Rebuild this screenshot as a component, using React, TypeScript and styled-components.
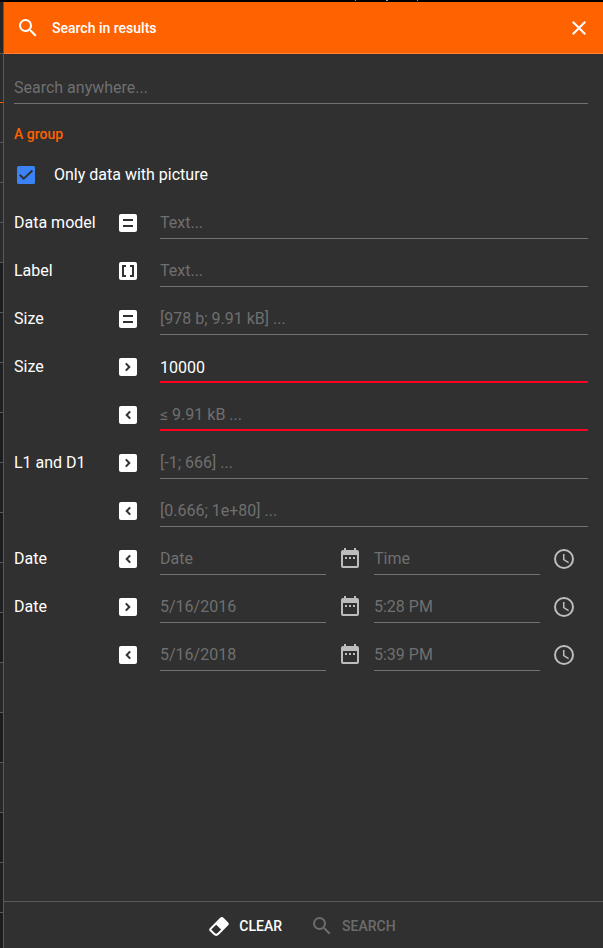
import React from "react";
import styled, { createGlobalStyle } from "styled-components";

const Global = createGlobalStyle`
  *, *::before, *::after { box-sizing: border-box; }
  body { margin: 0; background: #303030; color: #fff; font-family: Roboto, sans-serif; }
`;
const Page = styled.div`
  height: 948px;
  display: grid;
  grid-template: 2px 946px / 3px 1fr;
  overflow: hidden;
`;
const TopStrip = styled.div`
  grid-column: 1 / 3;
  display: flex;
  background: #000;
`;
const Speck = styled.i<{ $gap: number; $w: number }>`
  margin-left: ${(p) => p.$gap}px;
  width: ${(p) => p.$w}px;
  height: 1px;
  background: #9a9ab8;
`;
const Gutter = styled.div`
  display: flex;
  flex-direction: column;
`;
const GutterCell = styled.div<{ $h: number; $bg: string; $accent?: boolean }>`
  height: ${(p) => p.$h}px;
  flex: none;
  background: ${(p) => p.$bg};
  border-bottom: 1px solid ${(p) => (p.$accent ? "#ff6200" : "#595959")};
`;
const Panel = styled.main`
  display: flex;
  flex-direction: column;
  border-left: 1px solid #595959;
  background: #303030;
`;
const Header = styled.header`
  height: 52px;
  flex: none;
  display: flex;
  align-items: center;
  padding: 0 12px;
  background: #ff6200;
  border-bottom: 1px solid #ff8133;
`;
const Title = styled.h1`
  flex: 1;
  margin: 0 0 0 12px;
  font-size: 14px;
  line-height: 20px;
  font-weight: 500;
`;
const Icon = styled.svg`
  display: block;
  flex: none;
  width: 24px;
  height: 24px;
  fill: currentColor;
`;
const Body = styled.section`
  flex: 1;
  padding: 10px 15px 0 10px;
`;
const Row = styled.div`
  height: 48px;
  display: flex;
  align-items: flex-start;
`;
const Label = styled.span`
  width: 102px;
  flex: none;
  padding-top: 13px;
  font-size: 16px;
  line-height: 24px;
`;
const Operator = styled.span`
  width: 44px;
  flex: none;
  padding-top: 13px;
`;
const Field = styled.input<{ $error?: boolean; $wide?: boolean }>`
  display: block;
  width: ${(p) => (p.$wide ? "auto" : "166px")};
  flex: ${(p) => (p.$wide ? "1" : "none")};
  min-width: 0;
  height: 41px;
  margin: 0;
  padding: ${(p) => (p.$error ? (p.defaultValue ? "14px 0 2px" : "13px 0 3px") : "12px 0 4px")};
  border: 0;
  border-bottom: ${(p) => (p.$error ? "2px solid #ff0022" : "1px solid #717171")};
  border-radius: 0;
  outline: 0;
  background: transparent;
  color: #fff;
  font: 400 16px/24px Roboto, sans-serif;
  &::placeholder { color: #6f6f6f; opacity: 1; }
`;
const SearchField = styled(Field)`
  height: 40px;
  padding: 11px 0 4px;
`;
const PickerIcon = styled.span<{ $drop?: number }>`
  width: 48px;
  flex: none;
  padding: ${(p) => 12 + (p.$drop ?? 0)}px 12px 0;
  color: #bdbdbd;
`;
const SearchRow = styled.div`
  height: 48px;
  display: flex;
  align-items: flex-start;
`;
const GroupTitle = styled.h2`
  margin: 11px 0 0;
  height: 27px;
  font-size: 14px;
  line-height: 20px;
  padding-top: 1px;
  font-weight: 500;
  color: #ff6200;
`;
const CheckRow = styled.label`
  height: 48px;
  display: flex;
  align-items: flex-start;
  padding-top: 13px;
  font-size: 16px;
  line-height: 23px;
`;
const CheckIcon = styled(Icon)`
  color: #3b82f6;
  margin-right: 16px;
`;
const Footer = styled.footer`
  height: 47px;
  flex: none;
  display: flex;
  align-items: center;
  justify-content: center;
  gap: 28px;
  padding: 2px 4px 0 0;
  border-top: 1px solid #595959;
`;
const Action = styled.button<{ $muted?: boolean }>`
  display: flex;
  align-items: center;
  gap: 8px;
  border: 0;
  padding: 0;
  background: transparent;
  color: ${(p) => (p.$muted ? "#6c6c6c" : "#fff")};
  font: 500 14px/20px Roboto, sans-serif;
`;

const SEARCH =
  "M9.5 3A6.5 6.5 0 0 1 16 9.5c0 1.61-.59 3.09-1.56 4.23l.27.27h.79l5 5-1.5 1.5-5-5v-.79l-.27-.27A6.516 6.516 0 0 1 9.5 16a6.5 6.5 0 0 1 0-13m0 2C7 5 5 7 5 9.5S7 14 9.5 14 14 12 14 9.5 12 5 9.5 5Z";
const CLOSE =
  "M19 6.41 17.59 5 12 10.59 6.41 5 5 6.41 10.59 12 5 17.59 6.41 19 12 13.41 17.59 19 19 17.59 13.41 12Z";
const ERASER =
  "M16.24 3.56l4.95 4.94c.78.79.78 2.05 0 2.84L12 20.53a4.008 4.008 0 0 1-5.66 0L2.81 17c-.78-.79-.78-2.05 0-2.84l10.6-10.6c.79-.78 2.05-.78 2.83 0M4.22 15.58l3.54 3.53c.78.79 2.04.79 2.83 0l3.53-3.53-4.95-4.95-4.95 4.95Z";
const CALENDAR =
  "M7 11h2v2H7v-2m4 0h2v2h-2v-2m4 0h2v2h-2v-2M5 22a2 2 0 0 1-2-2V6c0-1.1.9-2 2-2h1V2h2v2h8V2h2v2h1a2 2 0 0 1 2 2v14a2 2 0 0 1-2 2H5m0-2h14V9H5v11Z";
const CLOCK =
  "M12 20a8 8 0 0 0 0-16 8 8 0 0 0 0 16m0-18a10 10 0 1 1 0 20 10 10 0 0 1 0-20m.5 5v5.25l4.5 2.67-.75 1.23L11 13V7h1.5Z";

type Op = "eq" | "in" | "gt" | "lt";
const glyphs: Record<Op, string> = {
  eq: "M7 9H17M7 15H17",
  in: "M10 7H7V17H10M14 7H17V17H14",
  gt: "M9.8 8.4L13.3 12L9.8 15.6",
  lt: "M14.2 8.4L10.7 12L14.2 15.6",
};

const Glyph = ({ d }: { d: string }) => (
  <Icon viewBox="0 0 24 24"><path d={d} /></Icon>
);
const OperatorIcon = ({ op }: { op: Op }) => (
  <Operator>
    <Icon viewBox="0 0 24 24">
      <rect x="3" y="3" width="18" height="18" rx="2" />
      <path d={glyphs[op]} fill="none" stroke="#303030" strokeWidth="2" />
    </Icon>
  </Operator>
);

const filters: { label?: string; op: Op; hint: string; value?: string; error?: boolean }[] = [
  { label: "Data model", op: "eq", hint: "Text..." },
  { label: "Label", op: "in", hint: "Text..." },
  { label: "Size", op: "eq", hint: "[978 b; 9.91 kB] ..." },
  { label: "Size", op: "gt", hint: "", value: "10000", error: true },
  { op: "lt", hint: "≤ 9.91 kB ...", error: true },
  { label: "L1 and D1", op: "gt", hint: "[-1; 666] ..." },
  { op: "lt", hint: "[0.666; 1e+80] ..." },
];
const dates: { label?: string; op: Op; date: string; time: string }[] = [
  { label: "Date", op: "lt", date: "Date", time: "Time" },
  { label: "Date", op: "gt", date: "5/16/2016", time: "5:28 PM" },
  { op: "lt", date: "5/16/2018", time: "5:39 PM" },
];
const specks: [number, number][] = [[355, 1], [30, 2], [29, 1]];
const cells: [number, string][] = [
  [52, "#262626"], [49, "#2b2b2b"], [40, "#2b2b2b"], [40, "#2b2b2b"], [40, "#2b2b2b"], [40, "#2b2b2b"],
  [50, "#1c1c1c"], [50, "#212121"], [50, "#212121"], [50, "#1c1c1c"], [50, "#212121"], [50, "#1c1c1c"],
  [50, "#212121"], [50, "#1c1c1c"], [50, "#282828"], [50, "#1c1c1c"], [50, "#282828"], [50, "#1c1c1c"],
  [50, "#212121"], [50, "#1c1c1c"], [50, "#282828"],
];

export default function App() {
  return (
    <>
      <Global />
      <Page>
        <TopStrip>
          {specks.map(([gap, w]) => <Speck key={gap} $gap={gap} $w={w} />)}
        </TopStrip>
        <Gutter>
          {cells.map(([h, bg], i) => <GutterCell key={i} $h={h} $bg={bg} $accent={i === 1} />)}
        </Gutter>
        <Panel>
          <Header>
            <Glyph d={SEARCH} />
            <Title>Search in results</Title>
            <Glyph d={CLOSE} />
          </Header>
          <Body>
            <SearchRow><SearchField $wide placeholder="Search anywhere..." /></SearchRow>
            <GroupTitle>A group</GroupTitle>
            <CheckRow>
              <CheckIcon viewBox="0 0 24 24">
                <rect x="3" y="3" width="18" height="18" rx="1.5" />
                <path d="M5.7 11.8L9.7 15.7L18.4 7.5" fill="none" stroke="#303030" strokeWidth="2" />
              </CheckIcon>
              Only data with picture
            </CheckRow>
            {filters.map((f, i) => (
              <Row key={i}>
                <Label>{f.label}</Label>
                <OperatorIcon op={f.op} />
                <Field $wide $error={f.error} placeholder={f.hint} defaultValue={f.value} />
              </Row>
            ))}
            {dates.map((d, i) => (
              <Row key={i}>
                <Label>{d.label}</Label>
                <OperatorIcon op={d.op} />
                <Field placeholder={d.date} />
                <PickerIcon><Glyph d={CALENDAR} /></PickerIcon>
                <Field placeholder={d.time} />
                <PickerIcon $drop={1}><Glyph d={CLOCK} /></PickerIcon>
              </Row>
            ))}
          </Body>
          <Footer>
            <Action><Glyph d={ERASER} />CLEAR</Action>
            <Action $muted><Glyph d={SEARCH} />SEARCH</Action>
          </Footer>
        </Panel>
      </Page>
    </>
  );
}
